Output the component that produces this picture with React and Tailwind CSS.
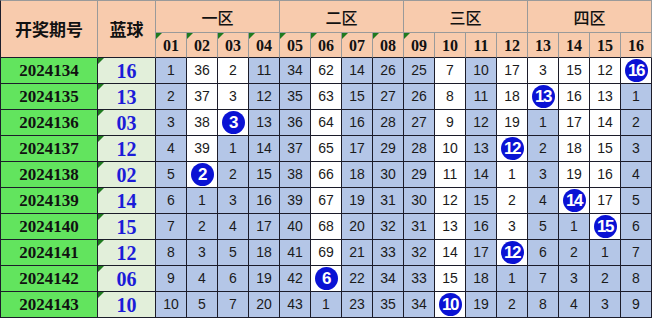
import React from "react";

const periods = [
  ["2024134", "16"],
  ["2024135", "13"],
  ["2024136", "03"],
  ["2024137", "12"],
  ["2024138", "02"],
  ["2024139", "14"],
  ["2024140", "15"],
  ["2024141", "12"],
  ["2024142", "06"],
  ["2024143", "10"],
];

const range = (a) => Array.from({ length: 10 }, (_, i) => a + i);

// omission per number column, 0 = drawn that period
const cols = [
  range(1),
  [36, 37, 38, 39, 0, 1, 2, 3, 4, 5],
  [2, 3, 0, 1, 2, 3, 4, 5, 6, 7],
  range(11),
  range(34),
  [62, 63, 64, 65, 66, 67, 68, 69, 0, 1],
  range(14),
  range(26),
  range(25),
  [7, 8, 9, 10, 11, 12, 13, 14, 15, 0],
  range(10),
  [17, 18, 19, 0, 1, 2, 3, 0, 1, 2],
  [3, 0, 1, 2, 3, 4, 5, 6, 7, 8],
  [15, 16, 17, 18, 19, 0, 1, 2, 3, 4],
  [12, 13, 14, 15, 16, 17, 0, 1, 2, 3],
  [0, 1, 2, 3, 4, 5, 6, 7, 8, 9],
];

const zones = ["一区", "二区", "三区", "四区"];

function Tick() {
  return (
    <span className="absolute left-0 top-0 h-0 w-0 border-t-[6px] border-r-[6px] border-t-[#1f7a1f] border-r-transparent" />
  );
}

function Ball({ n }) {
  return (
    <span className="flex h-[23px] w-[23px] items-center justify-center rounded-full bg-[#0a12d4] font-['Liberation_Sans',sans-serif] text-[17px] font-bold tracking-[-1.5px] text-white">
      {n}
    </span>
  );
}

export default function App() {
  const head = "relative flex items-center justify-center border-r border-b border-[#9a9a9a] bg-[#f8cbad] text-[#111]";
  const body = "relative flex items-center justify-center border-r border-b border-[#1c1c2a]";
  const cjk = "font-['Noto_Sans_CJK_SC',sans-serif]";
  const serif = "font-['Liberation_Serif',serif]";

  return (
    <div className="h-[318px] w-[652px] bg-white">
      <div className="grid grid-cols-[97px_58px_repeat(16,31px)] grid-rows-[32px_25px_repeat(10,26px)] border-l border-t border-l-[#1c1c2a] border-t-[#9a9a9a]">
        <div className={`${head} ${cjk} row-span-2 border-b-[#1c1c2a] text-[17px] font-bold`}>开奖期号</div>
        <div className={`${head} ${cjk} row-span-2 border-b-[#1c1c2a] text-[17px] font-bold`}>蓝球</div>
        {zones.map((z) => (
          <div key={z} className={`${head} ${cjk} col-span-4 text-[16px] font-medium`}>
            {z}
          </div>
        ))}
        {cols.map((_, i) => (
          <div key={i} className={`${head} ${serif} border-b-[#1c1c2a] pt-[2px] text-[16px] font-bold`}>
            {i < 9 && <Tick />}
            {String(i + 1).padStart(2, "0")}
          </div>
        ))}

        {periods.map(([p, b], r) => (
          <React.Fragment key={p}>
            <div className={`${body} ${serif} bg-[#62e45e] pt-[1px] text-[17px] font-bold text-[#111]`}>{p}</div>
            <div className={`${body} ${serif} bg-[#e2efda] pt-[1px] text-[20px] font-bold text-[#1c1cd8]`}>
              <Tick />
              {b}
            </div>
            {cols.map((col, c) => {
              const v = col[r];
              const white = col.slice(r).includes(0);
              return (
                <div
                  key={c}
                  className={`${body} ${white ? "bg-white" : "bg-[#b4c6e7]"} font-['Liberation_Sans',sans-serif] text-[14px] text-[#1a1a1a]`}
                >
                  {v === 0 ? <Ball n={c + 1} /> : v}
                </div>
              );
            })}
          </React.Fragment>
        ))}
      </div>
    </div>
  );
}
